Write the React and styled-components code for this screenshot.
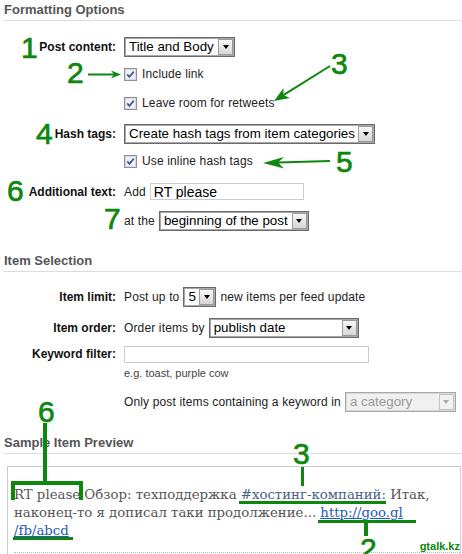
import React from 'react';
import styled, { createGlobalStyle } from 'styled-components';

const GREEN = '#0d870d';

const GlobalStyle = createGlobalStyle`
  html, body { margin: 0; padding: 0; background: #fff; }
  body { font-family: "Liberation Sans", Arial, sans-serif; font-size: 12px; color: #222; }
  * { box-sizing: border-box; }
`;

const Page = styled.div`
  position: relative;
  width: 462px;
  height: 554px;
  overflow: hidden;
  padding-left: 4px;
`;

const SectionTitle = styled.h3`
  margin: ${p => p.$mt || 0}px 0 0;
  padding: 2px 0 3px;
  font-size: 13px;
  line-height: 15px;
  font-weight: bold;
  color: #555;
  border-bottom: 1px solid #ddd;
`;

const Row = styled.div`
  display: grid;
  grid-template-columns: 112px auto;
  column-gap: 8px;
  align-items: ${p => p.$align || 'center'};
  margin-top: ${p => p.$mt}px;
`;

const Label = styled.div`
  text-align: right;
  font-weight: bold;
  color: #111;
  font-size: 12px;
  line-height: ${p => p.$lh || 14}px;
  white-space: nowrap;
`;

const Controls = styled.div`
  display: flex;
  align-items: center;
  gap: 4px;
  white-space: nowrap;
  line-height: 14px;
  letter-spacing: 0.14px;
  color: #222;
`;

const Stack = styled.div`
  display: flex;
  flex-direction: column;
  align-items: flex-start;
`;

const Hint = styled.div`
  margin-top: 4px;
  font-size: 11px;
  line-height: 13px;
  color: #444;
`;

const CheckLabel = styled.label`
  display: flex;
  align-items: center;
  gap: 5px;
  line-height: 13px;
  color: #222;
`;

const SelectBox = styled.div`
  display: inline-flex;
  align-items: center;
  width: ${p => p.$w}px;
  height: 20px;
  padding: 1px;
  letter-spacing: 0;
  border: 1px solid ${p => (p.$disabled ? '#a8a8a8' : '#6a6a6a')};
  box-shadow: inset 0 0 0 1px ${p => (p.$disabled ? '#d8d8d8' : '#a8a8a8')};
  background: ${p => (p.$disabled ? '#f0f0f0' : '#fff')};
`;

const SelectText = styled.span`
  flex: 1;
  padding-left: 3px;
  font-size: 13.33px;
  line-height: 16px;
  color: ${p => (p.$disabled ? '#9a9a9a' : '#000')};
  white-space: nowrap;
  overflow: hidden;
`;

const SelectButton = styled.span`
  width: 15px;
  height: 16px;
  display: flex;
  align-items: center;
  justify-content: center;
  border: 1px solid ${p => (p.$disabled ? '#c4c4c4' : '#9a9a9a')};
  background: ${p => (p.$disabled ? '#f2f2f2' : 'linear-gradient(#f8f8f8, #d6d6d6)')};
`;

const Triangle = styled.span`
  width: 0;
  height: 0;
  border-left: 3.5px solid transparent;
  border-right: 3.5px solid transparent;
  border-top: 4px solid ${p => (p.$disabled ? '#aaa' : '#000')};
`;

const TextInput = styled.input`
  width: ${p => p.$w}px;
  height: 17px;
  margin: 0;
  padding: 0 3px;
  border: 1px solid #c6cdd6;
  font-family: "Liberation Sans", Arial, sans-serif;
  font-size: 14px;
  letter-spacing: 0;
  color: #000;
  outline: none;
  background: #fff;
`;

const PreviewBox = styled.div`
  margin: 12px 1px 0 3px;
  border: 1px solid #ccc;
  padding: 0 0 0 6px;
  height: 140px;
`;

const PreviewItem = styled.div`
  padding: 19px 0 12px;
  border-bottom: 1px dotted #bbb;
  font-family: "DejaVu Serif", Georgia, serif;
  font-size: 13.3px;
  line-height: 18px;
  color: #555;
  white-space: nowrap;
`;

const Hash = styled.span`
  color: #4a6189;
`;

const Link = styled.a`
  color: #1d5bb5;
  text-decoration: underline;
`;

const Overlay = styled.svg`
  position: absolute;
  left: 0;
  top: 0;
  width: 462px;
  height: 554px;
  pointer-events: none;
`;

const Marker = styled.span`
  position: absolute;
  left: ${p => p.$x}px;
  top: ${p => p.$y}px;
  font-family: "Liberation Sans", Arial, sans-serif;
  font-size: 30px;
  line-height: 30px;
  color: ${GREEN};
  -webkit-text-stroke: 0.7px ${GREEN};
`;

const Watermark = styled.span`
  position: absolute;
  right: 2px;
  bottom: 2px;
  font-family: "Liberation Sans", Arial, sans-serif;
  font-weight: bold;
  font-size: 11px;
  line-height: 12px;
  color: ${GREEN};
`;

function Select({ w, value, disabled }) {
  return (
    <SelectBox $w={w} $disabled={disabled}>
      <SelectText $disabled={disabled}>{value}</SelectText>
      <SelectButton $disabled={disabled}>
        <Triangle $disabled={disabled} />
      </SelectButton>
    </SelectBox>
  );
}

function Check({ children }) {
  return (
    <CheckLabel>
      <svg width="13" height="13" viewBox="0 0 13 13">
        <rect x="0.5" y="0.5" width="12" height="12" fill="#e3e5ea" stroke="#8e8f92" />
        <rect x="1.5" y="1.5" width="10" height="10" fill="#eef0f4" stroke="#d6d9e0" />
        <path d="M3.2 6.4 L5.4 8.9 L9.8 3.6" fill="none" stroke="#4a5a92" strokeWidth="1.7" />
      </svg>
      {children}
    </CheckLabel>
  );
}

export default function App() {
  return (
    <>
      <GlobalStyle />
      <Page>
        <SectionTitle>Formatting Options</SectionTitle>
        <Row $mt={16}>
          <Label>Post content:</Label>
          <Controls><Select w={111} value="Title and Body" /></Controls>
        </Row>
        <Row $mt={11}>
          <span />
          <Controls><Check>Include link</Check></Controls>
        </Row>
        <Row $mt={16}>
          <span />
          <Controls><Check>Leave room for retweets</Check></Controls>
        </Row>
        <Row $mt={14}>
          <Label>Hash tags:</Label>
          <Controls><Select w={251} value="Create hash tags from item categories" /></Controls>
        </Row>
        <Row $mt={11}>
          <span />
          <Controls><Check>Use inline hash tags</Check></Controls>
        </Row>
        <Row $mt={15}>
          <Label>Additional text:</Label>
          <Controls>
            Add <TextInput $w={154} defaultValue="RT please" readOnly />
          </Controls>
        </Row>
        <Row $mt={11}>
          <span />
          <Controls>
            at the <Select w={150} value="beginning of the post" />
          </Controls>
        </Row>

        <SectionTitle $mt={20}>Item Selection</SectionTitle>
        <Row $mt={15}>
          <Label>Item limit:</Label>
          <Controls>
            Post up to <Select w={33} value="5" /> new items per feed update
          </Controls>
        </Row>
        <Row $mt={11}>
          <Label>Item order:</Label>
          <Controls>
            Order items by <Select w={150} value="publish date" />
          </Controls>
        </Row>
        <Row $mt={8} $align="start">
          <Label $lh={17}>Keyword filter:</Label>
          <Stack>
            <TextInput $w={245} defaultValue="" readOnly />
            <Hint>e.g. toast, purple cow</Hint>
          </Stack>
        </Row>
        <Row $mt={12}>
          <span />
          <Controls>
            Only post items containing a keyword in <Select w={111} value="a category" disabled />
          </Controls>
        </Row>

        <SectionTitle $mt={21}>Sample Item Preview</SectionTitle>
        <PreviewBox>
          <PreviewItem>
            RT please Обзор: техподдержка <Hash>#хостинг-компаний</Hash>: Итак,
            <br />
            наконец-то я дописал таки продолжение... <Link href="#">http://goo.gl<br />/fb/abcd</Link>
          </PreviewItem>
        </PreviewBox>

        <Overlay viewBox="0 0 462 554">
          <g stroke={GREEN} strokeWidth="2" fill="none">
            <line x1="88" y1="74.5" x2="114" y2="74.5" />
            <line x1="330" y1="66" x2="283.3" y2="95.1" />
            <line x1="330" y1="161" x2="278" y2="162.5" />
          </g>
          <g fill={GREEN}>
            <polygon points="121,74.5 111,70.5 114,74.5 111,78.5" />
            <polygon points="274,101 283.5,87.9 283.3,95.1 289.9,98.1" />
            <polygon points="263,163 284,157 278,162.6 284,168.5" />
            <rect x="43" y="423" width="4" height="61" />
            <rect x="11" y="481" width="72" height="4" />
            <rect x="11" y="481" width="4" height="19" />
            <rect x="79" y="481" width="4" height="19" />
            <rect x="301" y="467" width="3" height="19" />
            <rect x="239" y="501" width="147" height="3" />
            <rect x="318" y="520" width="98" height="3" />
            <rect x="364" y="520" width="4" height="16" />
            <rect x="13" y="537" width="60" height="3" />
          </g>
        </Overlay>

        <Marker $x={21} $y={33}>1</Marker>
        <Marker $x={67} $y={58}>2</Marker>
        <Marker $x={331} $y={49}>3</Marker>
        <Marker $x={36} $y={119}>4</Marker>
        <Marker $x={336} $y={147}>5</Marker>
        <Marker $x={7} $y={176}>6</Marker>
        <Marker $x={104} $y={204}>7</Marker>
        <Marker $x={38} $y={397}>6</Marker>
        <Marker $x={293} $y={439}>3</Marker>
        <Marker $x={360} $y={534}>2</Marker>
        <Watermark>gtalk.kz</Watermark>
      </Page>
    </>
  );
}
